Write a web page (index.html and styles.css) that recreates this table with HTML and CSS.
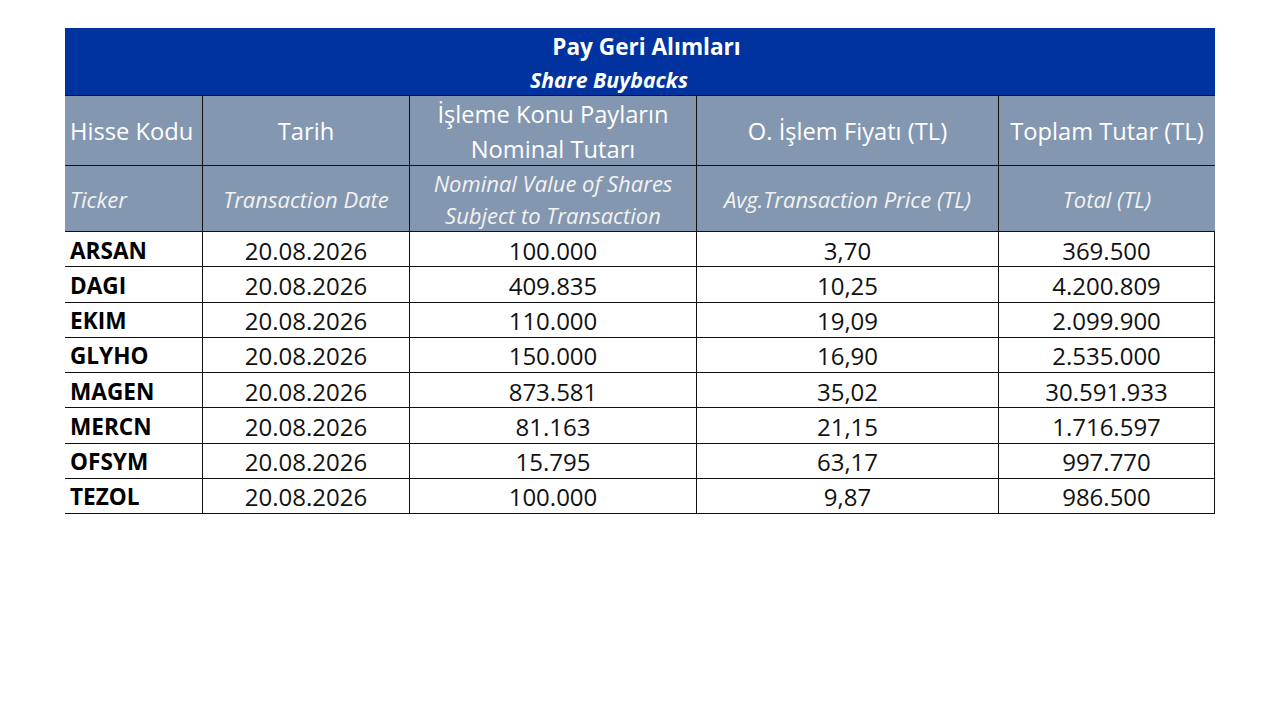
FILE: index.html
```html
<!DOCTYPE html>
<html lang="tr">
<head>
<meta charset="utf-8">
<title>Pay Geri Alımları</title>
<link rel="stylesheet" href="styles.css">
</head>
<body>
<div class="page">
  <div class="sheet">
    <div class="title">
      <div class="title-tr">Pay Geri Alımları</div>
      <div class="title-en">Share Buybacks</div>
    </div>

    <div class="hd hd1 left">Hisse Kodu</div>
    <div class="hd hd1">Tarih</div>
    <div class="hd hd1 two">İşleme Konu Payların<br>Nominal Tutarı</div>
    <div class="hd hd1">O. İşlem Fiyatı (TL)</div>
    <div class="hd hd1 last">Toplam Tutar (TL)</div>

    <div class="hd hd2 left">Ticker</div>
    <div class="hd hd2">Transaction Date</div>
    <div class="hd hd2 two">Nominal Value of Shares<br>Subject to Transaction</div>
    <div class="hd hd2">Avg.Transaction Price (TL)</div>
    <div class="hd hd2 last">Total (TL)</div>

    <div class="c tick">ARSAN</div><div class="c">20.08.2026</div><div class="c">100.000</div><div class="c">3,70</div><div class="c">369.500</div>
    <div class="c tick">DAGI</div><div class="c">20.08.2026</div><div class="c">409.835</div><div class="c">10,25</div><div class="c">4.200.809</div>
    <div class="c tick">EKIM</div><div class="c">20.08.2026</div><div class="c">110.000</div><div class="c">19,09</div><div class="c">2.099.900</div>
    <div class="c tick">GLYHO</div><div class="c">20.08.2026</div><div class="c">150.000</div><div class="c">16,90</div><div class="c">2.535.000</div>
    <div class="c tick">MAGEN</div><div class="c">20.08.2026</div><div class="c">873.581</div><div class="c">35,02</div><div class="c">30.591.933</div>
    <div class="c tick">MERCN</div><div class="c">20.08.2026</div><div class="c">81.163</div><div class="c">21,15</div><div class="c">1.716.597</div>
    <div class="c tick">OFSYM</div><div class="c">20.08.2026</div><div class="c">15.795</div><div class="c">63,17</div><div class="c">997.770</div>
    <div class="c tick">TEZOL</div><div class="c">20.08.2026</div><div class="c">100.000</div><div class="c">9,87</div><div class="c">986.500</div>
  </div>
</div>
</body>
</html>
```

FILE: styles.css
```css
* { box-sizing: border-box; }

html, body {
  margin: 0;
  padding: 0;
  background: #ffffff;
}

body {
  font-family: "Open Sans", "Noto Sans", "Liberation Sans", sans-serif;
  width: 1280px;
  height: 720px;
  overflow: hidden;
}

.page {
  padding: 28px 0 0 65px;
}

.sheet {
  width: 1150px;
  display: grid;
  grid-template-columns: 138px 207px 287px 302px 216px;
  grid-template-rows: 68px 70px 66px repeat(8, 35.25px);
}

.title {
  grid-column: 1 / 6;
  background: #0033a0;
  color: #ffffff;
  border-bottom: 1.5px solid #111;
  display: flex;
  flex-direction: column;
  align-items: center;
  padding-top: 2px;
}

.title-tr {
  font-weight: 700;
  font-size: 22.6px;
  line-height: 34px;
  padding-left: 13px;
}

.title-en {
  font-weight: 700;
  font-style: italic;
  font-size: 21.3px;
  line-height: 32px;
  padding-right: 62px;
}

.hd {
  background: #8497b0;
  color: #ffffff;
  border-right: 1.5px solid #111;
  border-bottom: 1.5px solid #111;
  display: flex;
  align-items: center;
  justify-content: center;
  text-align: center;
  white-space: nowrap;
}

.hd.last { border-right: none; }

.hd.left {
  justify-content: flex-start;
  text-align: left;
  padding-left: 5px;
}

.hd1 {
  font-size: 23.7px;
  line-height: 35px;
  padding-top: 2px;
}

.hd2 {
  font-style: italic;
  font-size: 22px;
  line-height: 32px;
  color: #f2f2f2;
}

.c {
  border-right: 1.5px solid #111;
  border-bottom: 1.5px solid #111;
  color: #111;
  font-size: 24px;
  display: flex;
  align-items: center;
  justify-content: center;
  white-space: nowrap;
  padding-top: 2px;
}

.c.tick {
  justify-content: flex-start;
  padding-left: 5px;
  font-weight: 700;
  font-size: 22.6px;
  color: #000;
}
```
